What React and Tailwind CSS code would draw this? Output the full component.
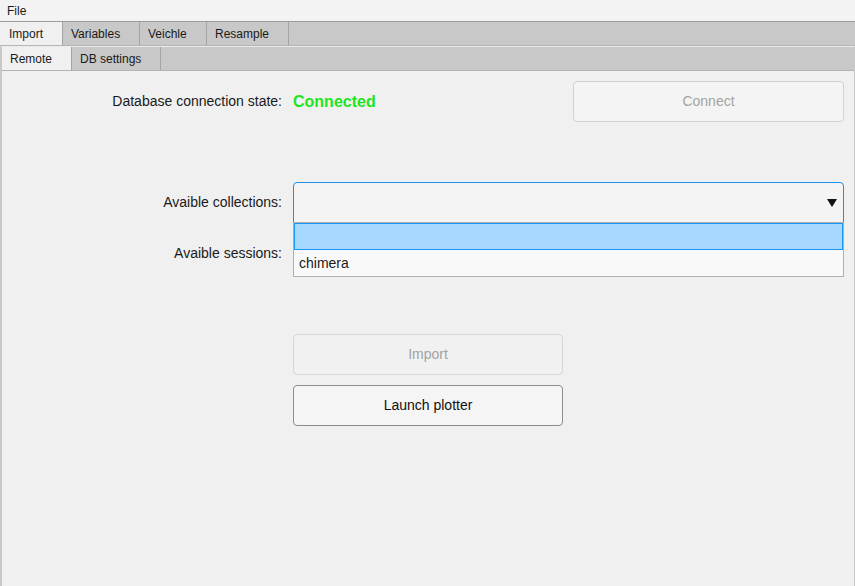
import { useState } from "react";

const outerTabs = [
  { name: "Import", w: "w-[63px] pl-[9px]" },
  { name: "Variables", w: "w-[77px] pl-[8px]" },
  { name: "Veichle", w: "w-[67px] pl-[8px]" },
  { name: "Resample", w: "w-[82px] pl-[8px]" },
];

const innerTabs = [
  { name: "Remote", w: "w-[70px]" },
  { name: "DB settings", w: "w-[89px]" },
];

const App = () => {
  const [outer, setOuter] = useState("Import");
  const [inner, setInner] = useState("Remote");

  return (
    <div className="w-[855px] h-[586px] overflow-hidden bg-[#f0f0f0] text-[#1a1a1a] flex flex-col" style={{ fontFamily: '"Liberation Sans", Arial, sans-serif' }}>
      {/* menu bar */}
      <div className="h-[22px] bg-[#f3f3f3] border-b border-[#9a9a9a] flex items-center px-[7px] text-[12px] shrink-0">
        File
      </div>

      {/* outer tabs */}
      <div className="h-[24px] bg-[#c8c8c8] border-b border-[#b4b4b4] flex shrink-0">
        {outerTabs.map((t) => (
          <div
            key={t.name}
            onClick={() => setOuter(t.name)}
            className={`${t.w} h-full flex items-center text-[12px] cursor-pointer border-r border-[#a3a3a3] ${outer === t.name ? "bg-[#f0f0f0]" : ""}`}
          >
            {t.name}
          </div>
        ))}
      </div>

      <div className="flex-1 flex flex-col border-l-2 border-r border-[#c8c8c8] border-t border-t-[#ececec]">
        {/* inner tabs */}
        <div className="h-[24px] bg-[#c8c8c8] border-b border-[#b4b4b4] flex shrink-0">
          {innerTabs.map((t) => (
            <div
              key={t.name}
              onClick={() => setInner(t.name)}
              className={`${t.w} h-full flex items-center pl-[8px] text-[12px] cursor-pointer border-r border-[#a3a3a3] ${inner === t.name ? "bg-[#f0f0f0]" : ""}`}
            >
              {t.name}
            </div>
          ))}
        </div>

        {/* remote page */}
        <div className="flex-1 flex flex-col pt-[10px] pr-[10px] text-[14px]">
          <div className="flex items-center h-[41px]">
            <div className="w-[280px] text-right">Database connection state:</div>
            <div className="ml-[11px] text-[16px] font-bold text-[#1ee51e]">Connected</div>
            <div className="flex-1" />
            <button className="w-[271px] h-[41px] rounded-[4px] border border-[#d2d2d2] bg-[#f4f4f4] text-[#a3a3a3]">
              Connect
            </button>
          </div>

          <div className="flex items-center h-[41px] mt-[60px]">
            <div className="w-[280px] text-right">Avaible collections:</div>
            <div className="ml-[11px] flex-1 relative h-full">
              <div className="h-full rounded-t-[4px] border border-[#1e8fe6] bg-[#f4f4f4] flex items-center justify-end pr-[6px]">
                <svg width="10" height="8" viewBox="0 0 10 8"><path d="M0 0h10L5 8z" fill="#111" /></svg>
              </div>
              {/* open dropdown list */}
              <div className="absolute left-0 right-0 top-[40px] z-10 border border-[#b0b0b0] bg-[#f9f9f9]">
                <div className="h-[27px] bg-[#a6d8ff] border border-[#1a97f0]" />
                <div className="h-[26px] flex items-center pl-[5px]">chimera</div>
              </div>
            </div>
          </div>

          <div className="flex items-center h-[41px] mt-[10px]">
            <div className="w-[280px] text-right">Avaible sessions:</div>
            <div className="ml-[11px] flex-1 h-full" />
          </div>

          <div className="flex flex-col gap-[10px] ml-[291px] mt-[60px] w-[270px]">
            <button className="h-[41px] rounded-[4px] border border-[#d6d6d6] bg-[#f1f1f1] text-[#a3a3a3]">
              Import
            </button>
            <button className="h-[41px] rounded-[4px] border border-[#8c8c8c] bg-[#f5f5f5] text-[#111]">
              Launch plotter
            </button>
          </div>
        </div>
      </div>
    </div>
  );
};

export default App;
